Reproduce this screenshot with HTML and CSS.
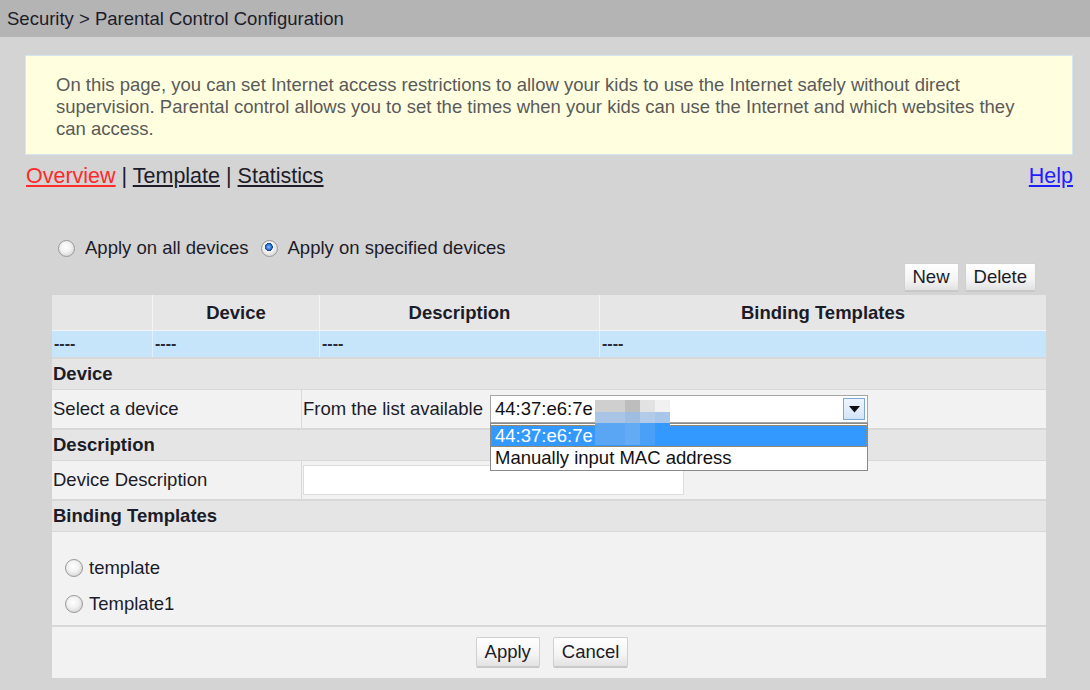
FILE: index.html
```html
<!DOCTYPE html>
<html>
<head>
<meta charset="utf-8">
<title>Parental Control Configuration</title>
<link rel="stylesheet" href="styles.css">
</head>
<body>
<div class="titlebar">Security &gt; Parental Control Configuration</div>
<div class="page">
  <div class="note">On this page, you can set Internet access restrictions to allow your kids to use the Internet safely without direct supervision. Parental control allows you to set the times when your kids can use the Internet and which websites they can access.</div>
  <div class="tabs">
    <div class="tablinks"><a class="tab active">Overview</a> | <a class="tab">Template</a> | <a class="tab">Statistics</a></div>
    <a class="help">Help</a>
  </div>
  <div class="scope">
    <label class="opt"><input type="radio" name="scope" class="radio">Apply on all devices</label>
    <label class="opt"><input type="radio" name="scope" class="radio" checked>Apply on specified devices</label>
  </div>
  <div class="toolbar">
    <button class="btn">New</button>
    <button class="btn">Delete</button>
  </div>
  <div class="panel">
    <div class="grid head">
      <div class="cell"></div>
      <div class="cell">Device</div>
      <div class="cell">Description</div>
      <div class="cell">Binding Templates</div>
    </div>
    <div class="grid data">
      <div class="cell">----</div>
      <div class="cell">----</div>
      <div class="cell">----</div>
      <div class="cell">----</div>
    </div>
    <div class="sec first">Device</div>
    <div class="frow">
      <div class="lbl">Select a device</div>
      <div class="val">
        <span class="vtext">From the list available</span>
        <div class="selectwrap">
          <div class="select">
            <span class="seltext">44:37:e6:7e</span>
            <span class="selbtn"><svg width="11" height="7" viewBox="0 0 11 7"><path d="M0 0h11L5.5 6.5z" fill="#111"/></svg></span>
          </div>
          <div class="listbox">
            <div class="option selected">44:37:e6:7e</div>
            <div class="option">Manually input MAC address</div>
          </div>
          <div class="mask">
            <i class="b1"></i><i class="b2"></i><i class="b3"></i><i class="b4"></i>
            <i class="c1"></i><i class="c2"></i><i class="c3"></i><i class="c4"></i>
            <i class="d1"></i><i class="d2"></i><i class="d3"></i><i class="d4"></i>
          </div>
        </div>
      </div>
    </div>
    <div class="sec">Description</div>
    <div class="frow">
      <div class="lbl">Device Description</div>
      <div class="val"><input class="textin" type="text"></div>
    </div>
    <div class="sec">Binding Templates</div>
    <div class="templates">
      <label class="opt"><input type="radio" name="tpl" class="radio">template</label>
      <label class="opt"><input type="radio" name="tpl" class="radio">Template1</label>
    </div>
    <div class="actions">
      <button class="btn">Apply</button>
      <button class="btn">Cancel</button>
    </div>
  </div>
</div>
</body>
</html>
```

FILE: styles.css
```css
html, body {
  margin: 0;
  padding: 0;
}
body {
  background: #d4d4d4;
  font-family: "Liberation Sans", Arial, sans-serif;
  font-size: 18.5px;
  color: #1c1c28;
  width: 1090px;
  height: 690px;
  overflow: hidden;
}
.titlebar {
  height: 37px;
  background: #b4b4b4;
  line-height: 37px;
  padding-left: 7px;
  font-size: 18.5px;
  color: #1c1c2a;
}
.page {
  padding-left: 25px;
  width: 1048px;
}
.note {
  margin-top: 18px;
  height: 94px;
  box-sizing: content-box;
  background: #ffffe0;
  border: 1px solid #d6e6ee;
  padding: 4px 40px 0 30px;
  color: #5a5a5a;
  font-size: 18.5px;
  line-height: 22px;
  display: flex;
  align-items: center;
}
.tabs {
  margin-top: 8px;
  display: flex;
  justify-content: space-between;
  font-size: 21.5px;
  line-height: 26px;
  padding-left: 1px;
}
.tablinks {
  color: #1c1c2a;
}
.tab {
  color: #1c1c2a;
  text-decoration: underline;
}
.tab.active {
  color: #ff2a2a;
}
.help {
  color: #1f1fff;
  text-decoration: underline;
}
.scope {
  margin-top: 47px;
  margin-left: 32px;
  display: flex;
  gap: 11px;
  line-height: 24px;
}
.opt {
  display: flex;
  align-items: center;
  color: #1c1c2a;
}
.radio {
  appearance: none;
  -webkit-appearance: none;
  width: 17px;
  height: 17px;
  margin: 0 10px 0 1px;
  border-radius: 50%;
  border: 1px solid #9a9a9a;
  background: radial-gradient(circle at 45% 40%, #ffffff 0%, #f0f0f0 45%, #c4c4c4 100%);
  box-sizing: border-box;
  flex: none;
}
.radio:checked {
  background:
    radial-gradient(circle at 45% 40%, #8fc0ff 0, #2b6fd0 22%, #0d3f8f 32%, transparent 34%),
    radial-gradient(circle at 45% 40%, #ffffff 0%, #f0f0f0 45%, #c4c4c4 100%);
}
.toolbar {
  margin-top: 3px;
  margin-left: 27px;
  width: 984px;
  padding-right: 10px;
  display: flex;
  justify-content: flex-end;
  gap: 6px;
  height: 29px;
  margin-bottom: 3px;
}
.btn {
  font-family: "Liberation Sans", Arial, sans-serif;
  font-size: 18.5px;
  color: #1c1c2a;
  background: linear-gradient(#ffffff 0%, #f4f4f4 60%, #e2e2e2 100%);
  border: 1px solid #d0d0d0;
  border-bottom: 2px solid #c8c8c8;
  border-radius: 2px;
  padding: 0 8px;
  height: 29px;
  line-height: 26px;
}
.panel {
  margin-left: 27px;
  width: 994px;
  background: #d8d8d8;
}
.grid {
  display: grid;
  grid-template-columns: 100px 166px 279px 1fr;
  column-gap: 1px;
}
.grid.head {
  height: 35px;
  background: #f4f4f4;
  border-bottom: 1px solid #f4f4f4;
}
.grid.head .cell {
  background: #e6e6e6;
  font-weight: bold;
  text-align: center;
  line-height: 35px;
}
.grid.data {
  height: 26px;
  background: #e2f1fc;
}
.grid.data .cell {
  background: #c6e5fb;
  line-height: 26px;
  padding-left: 2px;
  font-weight: bold;
  font-size: 16px;
  color: #2a2a3a;
}
.sec {
  margin-top: 1px;
  height: 30px;
  line-height: 30px;
  background: #e5e5e5;
  font-weight: bold;
  padding-left: 1px;
}
.sec.first {
  margin-top: 2px;
}
.frow {
  margin-top: 1px;
  height: 38px;
  display: flex;
  background: #f2f2f2;
}
.frow + .sec {
  margin-top: 2px;
}
.lbl {
  width: 248px;
  padding-left: 1px;
  line-height: 38px;
  border-right: 1px solid #dadada;
}
.val {
  flex: 1;
  display: flex;
  align-items: center;
  padding-left: 1px;
}
.vtext {
  width: 187px;
  flex: none;
}
.selectwrap {
  position: relative;
  width: 378px;
  height: 28px;
}
.select {
  box-sizing: border-box;
  width: 378px;
  height: 28px;
  border: 1px solid #a5a5a5;
  background: #ffffff;
  display: flex;
  align-items: center;
  justify-content: space-between;
  padding-left: 4px;
}
.seltext {
  color: #111;
}
.selbtn {
  width: 22px;
  height: 22px;
  margin-right: 2px;
  box-sizing: border-box;
  border: 1px solid #7fa6d4;
  background: linear-gradient(#eef5fd, #d4e5f8);
  display: flex;
  align-items: center;
  justify-content: center;
}
.listbox {
  position: absolute;
  left: 0;
  top: 28px;
  width: 378px;
  box-sizing: border-box;
  border: 1px solid #8a8a8a;
  background: #ffffff;
  z-index: 5;
  padding: 1px 0;
}
.option {
  height: 22px;
  line-height: 22px;
  padding-left: 4px;
  color: #111;
}
.option.selected {
  background: #3399ff;
  color: #ffffff;
  border: 1px dotted #9c8a70;
  height: 20px;
  line-height: 20px;
  padding-left: 3px;
}
.mask {
  position: absolute;
  left: 105px;
  top: 5px;
  width: 75px;
  height: 45px;
  z-index: 6;
  display: grid;
  grid-template-columns: 30px 15px 15px 15px;
  grid-template-rows: 12px 11px 22px;
}
.mask i {
  display: block;
}
.b1 { background: #cfcfcf; }
.b2 { background: #bdbdbd; }
.b3 { background: #e2e2e2; }
.b4 { background: #f1f1f1; }
.c1 { background: #a9c4e4; }
.c2 { background: #9fbde0; }
.c3 { background: #b2cbe8; }
.c4 { background: #a8c6ea; }
.d1 { background: #5aa6f4; }
.d2 { background: #63acf5; }
.d3 { background: #4aa0f7; }
.d4 { background: #3399ff; }
.textin {
  width: 381px;
  height: 30px;
  box-sizing: border-box;
  border: 1px solid #dddddd;
  background: #ffffff;
  margin: 0;
}
.templates {
  margin-top: 1px;
  height: 93px;
  background: #f2f2f2;
  padding-left: 12px;
  padding-top: 24px;
  box-sizing: border-box;
  display: flex;
  flex-direction: column;
  gap: 12px;
  line-height: 24px;
}
.templates .radio {
  width: 18px;
  height: 18px;
  margin-right: 6px;
}
.actions {
  margin-top: 2px;
  height: 51px;
  background: #f2f2f2;
  display: flex;
  justify-content: center;
  align-items: center;
  gap: 13px;
  padding-left: 6px;
  box-sizing: border-box;
}
.actions .btn {
  height: 31px;
  line-height: 28px;
  padding: 0 8px;
}
```
